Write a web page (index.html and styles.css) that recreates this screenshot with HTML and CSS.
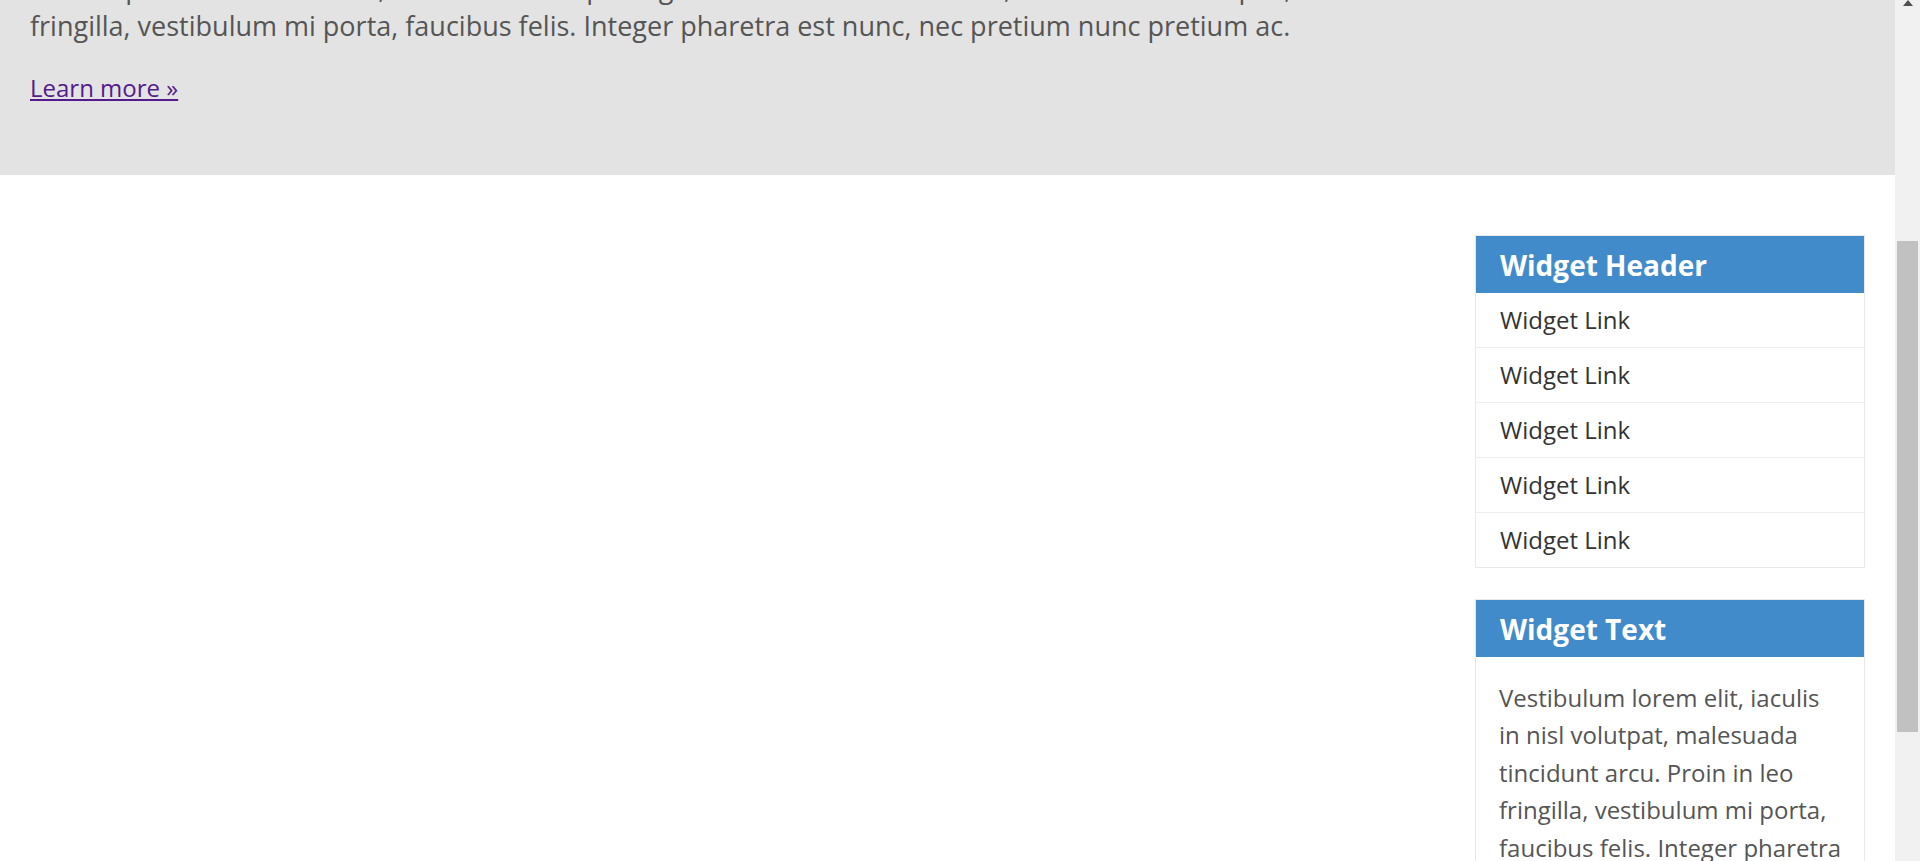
FILE: index.html
```html
<!DOCTYPE html>
<html lang="en">
<head>
<meta charset="utf-8">
<title>Widgets</title>
<link rel="stylesheet" href="styles.css">
</head>
<body>
<div class="screen">
  <div class="page">
    <section class="hero">
      <p class="hero-text">Lorem ipsum dolor sit amet, consectetur adipiscing elit. Morbi lacus nisi tellus, sed tincidunt tempus, in lorem a lectus hendrerit rhoncus. Nam in leo<br>fringilla, vestibulum mi porta, faucibus felis. Integer pharetra est nunc, nec pretium nunc pretium ac.</p>
      <p class="hero-more"><a href="#" class="learn">Learn more &raquo;</a></p>
    </section>
    <div class="content">
      <main class="main"></main>
      <aside class="sidebar">
        <div class="widget">
          <h3 class="widget-header">Widget Header</h3>
          <ul class="widget-links">
            <li><a href="#">Widget Link</a></li>
            <li><a href="#">Widget Link</a></li>
            <li><a href="#">Widget Link</a></li>
            <li><a href="#">Widget Link</a></li>
            <li><a href="#">Widget Link</a></li>
          </ul>
        </div>
        <div class="widget">
          <h3 class="widget-header">Widget Text</h3>
          <p class="widget-text">Vestibulum lorem elit, iaculis in nisl volutpat, malesuada tincidunt arcu. Proin in leo fringilla, vestibulum mi porta, faucibus felis. Integer pharetra est nunc, nec pretium nunc pretium ac.</p>
        </div>
      </aside>
    </div>
  </div>
  <div class="scrollbar">
    <div class="scroll-arrow"></div>
    <div class="scroll-thumb"></div>
  </div>
</div>
</body>
</html>
```

FILE: styles.css
```css
html, body {
  margin: 0;
  padding: 0;
  background: #ffffff;
}

body {
  font-family: "Open Sans", "Noto Sans", "Liberation Sans", sans-serif;
  color: #555555;
}

.screen {
  display: flex;
  height: 861px;
  overflow: hidden;
}

.page {
  flex: 1;
  min-width: 0;
  overflow: hidden;
}

.hero {
  background: #e3e3e3;
  padding: 0 30px 70px;
}

.hero-text {
  margin: -31px 0 0;
  font-size: 27px;
  line-height: 37.8px;
  color: #555555;
  white-space: nowrap;
}

.hero-more {
  margin: 26px 0 0;
  font-size: 24px;
  line-height: 34px;
}

.learn {
  color: #551a8b;
  text-decoration: underline;
}

.content {
  display: flex;
  gap: 30px;
  padding: 60px 30px 0;
}

.main {
  flex: 1;
}

.sidebar {
  width: 390px;
  display: flex;
  flex-direction: column;
  gap: 31px;
}

.widget {
  border: 1px solid #e9e9e9;
  background: #ffffff;
}

.widget-header {
  margin: 0;
  background: #428bca;
  color: #ffffff;
  font-size: 28px;
  font-weight: 700;
  line-height: 38px;
  padding: 10px 24px 9px;
}

.widget-links {
  list-style: none;
  margin: 0;
  padding: 0;
}

.widget-links li {
  border-bottom: 1px solid #eeeeee;
}

.widget-links li:last-child {
  border-bottom: none;
}

.widget-links a {
  display: block;
  padding: 10px 24px;
  font-size: 24px;
  line-height: 34px;
  color: #333333;
  text-decoration: none;
}

.widget-text {
  margin: 0;
  padding: 22px 20px 20px 23px;
  font-size: 24px;
  line-height: 37.5px;
  color: #555555;
}

.scrollbar {
  width: 25px;
  background: #f1f1f1;
  display: flex;
  flex-direction: column;
  align-items: center;
}

.scroll-arrow {
  width: 0;
  height: 0;
  border-left: 5.5px solid transparent;
  border-right: 5.5px solid transparent;
  border-bottom: 6px solid #505050;
}

.scroll-thumb {
  margin-top: 235px;
  width: 21px;
  height: 491px;
  background: #c1c1c1;
}
```
